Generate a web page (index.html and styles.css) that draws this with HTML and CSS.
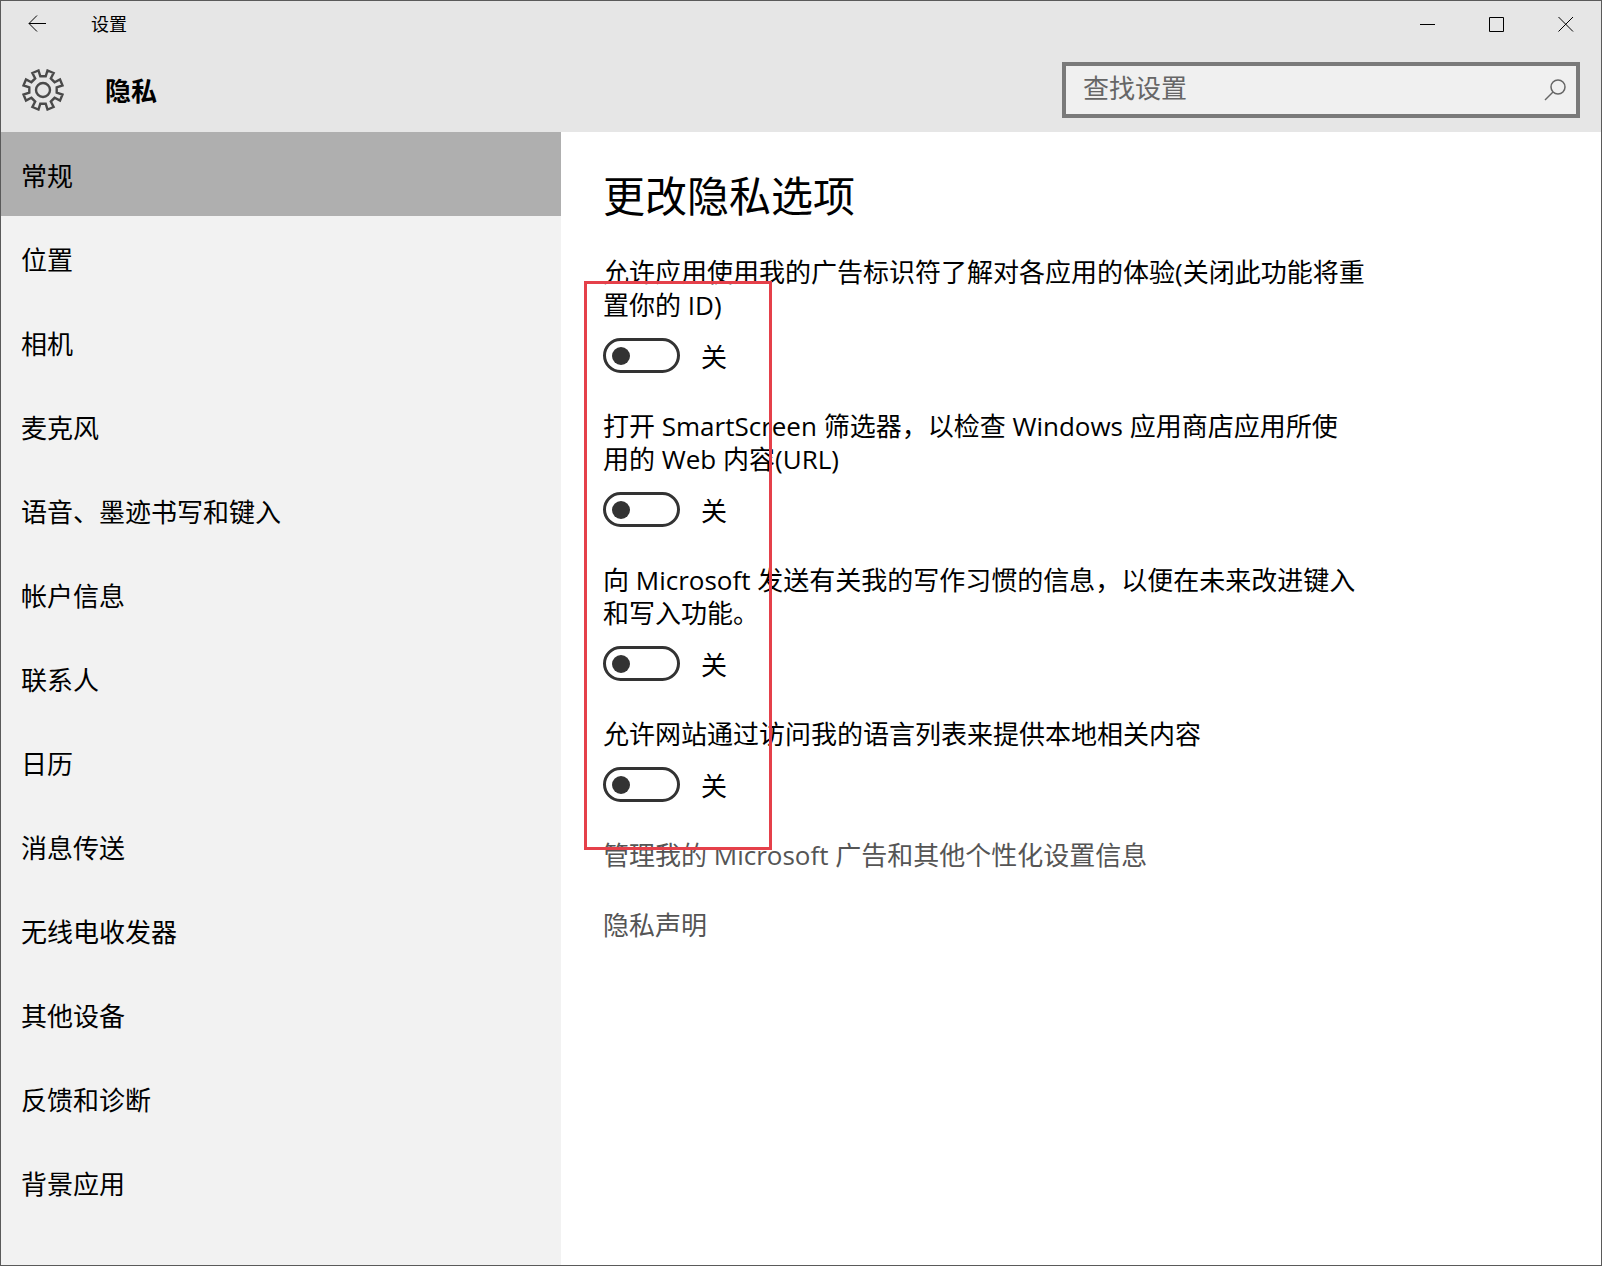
FILE: index.html
```html
<!DOCTYPE html>
<html lang="zh-CN">
<head>
<meta charset="utf-8">
<meta name="viewport" content="width=device-width, initial-scale=1">
<title>设置</title>
<link rel="stylesheet" href="styles.css">
</head>
<body>
<div class="window">
  <header class="top">
    <div class="titlebar">
      <button class="back" type="button" aria-label="返回">
        <svg width="20" height="20" viewBox="0 0 20 20"><path d="M19 9.5H2M10 1.5L2 9.5L10 17.5"/></svg>
      </button>
      <span class="caption">设置</span>
      <div class="controls">
        <button type="button" aria-label="最小化">
          <svg width="16" height="16" viewBox="0 0 16 16"><path d="M0 8.5H15"/></svg>
        </button>
        <button type="button" aria-label="最大化">
          <svg width="16" height="16" viewBox="0 0 16 16"><path d="M.5 1.5H14.5V15.5H.5Z"/></svg>
        </button>
        <button type="button" aria-label="关闭">
          <svg width="16" height="16" viewBox="0 0 16 16"><path d="M.5 1L15 15.5M15 1L.5 15.5"/></svg>
        </button>
      </div>
    </div>
    <div class="heading">
      <svg class="gear" width="42" height="42" viewBox="-21 -21 42 42">
        <path d="M2.7-13.7L4.5-19.5L10.6-17L7.8-11.6L11.6-7.8L17-10.6L19.5-4.5L13.7-2.7L13.7 2.7L19.5 4.5L17 10.6L11.6 7.8L7.8 11.6L10.6 17L4.5 19.5L2.7 13.7L-2.7 13.7L-4.5 19.5L-10.6 17L-7.8 11.6L-11.6 7.8L-17 10.6L-19.5 4.5L-13.7 2.7L-13.7-2.7L-19.5-4.5L-17-10.6L-11.6-7.8L-7.8-11.6L-10.6-17L-4.5-19.5L-2.7-13.7Z"/>
        <circle r="7"/>
      </svg>
      <span class="section">隐私</span>
      <form class="search" role="search">
        <input type="text" aria-label="查找设置" placeholder="查找设置">
        <button type="button" aria-label="搜索">
          <svg width="22" height="22" viewBox="0 0 22 22"><circle cx="14" cy="8" r="7"/><path d="M9 13L1 21"/></svg>
        </button>
      </form>
    </div>
  </header>
  <div class="body">
    <nav class="side">
      <a class="current" href="#general" aria-current="page">常规</a>
      <a href="#location">位置</a>
      <a href="#camera">相机</a>
      <a href="#microphone">麦克风</a>
      <a href="#speech">语音、墨迹书写和键入</a>
      <a href="#account">帐户信息</a>
      <a href="#contacts">联系人</a>
      <a href="#calendar">日历</a>
      <a href="#messaging">消息传送</a>
      <a href="#radios">无线电收发器</a>
      <a href="#devices">其他设备</a>
      <a href="#feedback">反馈和诊断</a>
      <a href="#background">背景应用</a>
    </nav>
    <main class="content">
      <h1>更改隐私选项</h1>
      <div class="options">
        <div class="option">
          <label for="ads">允许应用使用我的广告标识符了解对各应用的体验(关闭此功能将重置你的 ID)</label>
          <div class="switch"><input type="checkbox" role="switch" id="ads"><span>关</span></div>
        </div>
        <div class="option">
          <label for="smartscreen">打开 SmartScreen 筛选器，以检查 Windows 应用商店应用所使<br>用的 Web 内容(URL)</label>
          <div class="switch"><input type="checkbox" role="switch" id="smartscreen"><span>关</span></div>
        </div>
        <div class="option">
          <label for="typing">向 Microsoft 发送有关我的写作习惯的信息，以便在未来改进键入和写入功能。</label>
          <div class="switch"><input type="checkbox" role="switch" id="typing"><span>关</span></div>
        </div>
        <div class="option">
          <label for="languages">允许网站通过访问我的语言列表来提供本地相关内容</label>
          <div class="switch"><input type="checkbox" role="switch" id="languages"><span>关</span></div>
        </div>
        <a href="#manage">管理我的 Microsoft 广告和其他个性化设置信息</a>
        <a href="#statement">隐私声明</a>
        <div class="marker"></div>
      </div>
    </main>
  </div>
</div>
</body>
</html>
```
FILE: styles.css
```css
* {
  box-sizing: border-box;
}

body {
  margin: 0;
  background: #fff;
  color: #000;
  font-family: "Open Sans", "Noto Sans CJK SC", sans-serif;
  font-size: 26px;
  line-height: 33px;
}

a {
  color: inherit;
  text-decoration: none;
}

button {
  display: flex;
  align-items: center;
  justify-content: center;
  padding: 0;
  border: 0;
  background: none;
}

svg {
  display: block;
  fill: none;
  stroke: #000;
}

.window {
  display: flex;
  flex-direction: column;
  min-height: 100vh;
  border: 1px solid #5a5a5a;
}

.top {
  background: #e6e6e6;
}

.titlebar {
  display: flex;
  align-items: center;
  height: 46px;
}

.back {
  width: 72px;
  height: 46px;
}

.caption {
  margin-left: 18px;
  font-size: 18px;
}

.controls {
  display: flex;
  margin-left: auto;
  padding-right: 1px;
}

.controls button {
  width: 69px;
  height: 46px;
}

.heading {
  display: flex;
  align-items: center;
  height: 85px;
  padding: 0 21px;
}

.gear {
  stroke: #4a4a4a;
  stroke-width: 2.4;
}

.section {
  margin-left: 41px;
  padding-top: 4px;
  font-weight: 700;
}

.search {
  display: flex;
  width: 518px;
  height: 56px;
  margin-left: auto;
  border: 4px solid #7a7a7a;
  background: #f0f0f0;
}

.search input {
  flex: 1;
  min-width: 0;
  padding: 0 0 2px 17px;
  border: 0;
  outline: 0;
  background: none;
  color: #000;
  font: inherit;
}

.search input::placeholder {
  color: #666;
  opacity: 1;
}

.search button {
  width: 42px;
}

.search svg {
  stroke: #666;
  stroke-width: 1.5;
}

.body {
  display: flex;
  flex: 1;
}

.side {
  flex: 0 0 35%;
  background: #f2f2f2;
}

.side a {
  display: flex;
  align-items: center;
  height: 84px;
  padding: 4px 20px 0;
}

.side .current {
  background: #afafaf;
}

.content {
  flex: 1;
  padding: 36px 42px;
}

h1 {
  margin: 0 0 32px;
  font-size: 42px;
  font-weight: 400;
  line-height: 56px;
}

.options {
  position: relative;
  display: flex;
  flex-direction: column;
  align-items: flex-start;
  gap: 37px;
  max-width: 768px;
}

.option {
  display: flex;
  flex-direction: column;
  gap: 16px;
}

.options > a {
  color: #555;
}

.switch {
  display: flex;
  align-items: center;
  gap: 21px;
  height: 35px;
}

.switch span {
  padding-top: 4px;
}

.switch input {
  display: flex;
  align-items: center;
  width: 77px;
  height: 35px;
  margin: 0;
  padding-left: 6px;
  border: 3px solid #333;
  border-radius: 18px;
  appearance: none;
}

.switch input::before {
  width: 18px;
  height: 18px;
  border-radius: 50%;
  background: #333;
  content: "";
}

/* Red frame drawn over the switches */
.marker {
  position: absolute;
  top: 25px;
  left: -19px;
  width: 188px;
  height: 569px;
  border: 3px solid #e5404a;
  pointer-events: none;
}
```
